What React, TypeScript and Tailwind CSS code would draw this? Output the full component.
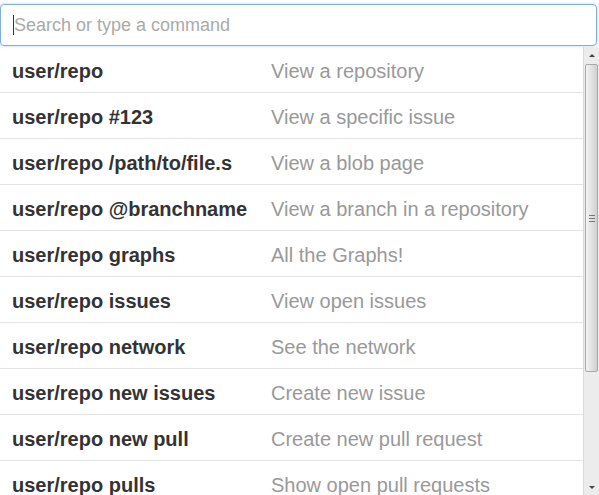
type Command = {
  query: string;
  description: string;
};

const commands: Command[] = [
  { query: 'user/repo', description: 'View a repository' },
  { query: 'user/repo #123', description: 'View a specific issue' },
  { query: 'user/repo /path/to/file.s', description: 'View a blob page' },
  { query: 'user/repo @branchname', description: 'View a branch in a repository' },
  { query: 'user/repo graphs', description: 'All the Graphs!' },
  { query: 'user/repo issues', description: 'View open issues' },
  { query: 'user/repo network', description: 'See the network' },
  { query: 'user/repo new issues', description: 'Create new issue' },
  { query: 'user/repo new pull', description: 'Create new pull request' },
  { query: 'user/repo pulls', description: 'Show open pull requests' },
];

function Scrollbar() {
  return (
    <div className="w-[16px] shrink-0 flex flex-col bg-[#ececec] border-l border-[#d9d9d9]">
      <div className="h-[17px] flex items-center justify-center">
        <div className="w-0 h-0 border-l-[3px] border-r-[3px] border-b-[3px] border-l-transparent border-r-transparent border-b-[#444]" />
      </div>
      <div className="mx-[1px] h-[308px] rounded-[2px] border border-[#a9a9a9] bg-gradient-to-r from-[#f4f4f4] via-[#e2e2e2] to-[#cfcfcf] flex items-center justify-center">
        <div className="flex flex-col gap-[2px]">
          <div className="w-[6px] h-[1px] bg-[#777]" />
          <div className="w-[6px] h-[1px] bg-[#777]" />
          <div className="w-[6px] h-[1px] bg-[#777]" />
        </div>
      </div>
      <div className="flex-1" />
      <div className="h-[16px] flex items-center justify-center">
        <div className="w-0 h-0 border-l-[3px] border-r-[3px] border-t-[3px] border-l-transparent border-r-transparent border-t-[#444]" />
      </div>
    </div>
  );
}

export default function App() {
  return (
    <div className="w-[599px] h-[495px] overflow-hidden bg-white flex flex-col font-['Liberation_Sans',Arial,sans-serif]">
      <div className="pt-[4px] pr-[2px]">
        <div className="h-[42px] rounded-[4px] border border-[#7fb0dc] shadow-[0_0_3px_rgba(82,168,236,0.5)] flex items-center pl-[12px]">
          <div className="w-[1px] h-[20px] bg-[#333]" />
          <span className="text-[18px] text-[#aaa] leading-none">Search or type a command</span>
        </div>
      </div>
      <div className="flex flex-1 min-h-0 mt-[1px]">
        <ul className="flex-1 min-w-0">
          {commands.map((cmd, i) => (
            <li key={i} className="h-[46px] pt-[2px] flex items-center border-b border-[#e3e3e3]">
              <span className="w-[271px] shrink-0 pl-[12px] text-[20px] font-bold text-[#333] whitespace-nowrap">
                {cmd.query}
              </span>
              <span className="text-[20px] text-[#999] whitespace-nowrap">{cmd.description}</span>
            </li>
          ))}
        </ul>
        <Scrollbar />
      </div>
    </div>
  );
}
